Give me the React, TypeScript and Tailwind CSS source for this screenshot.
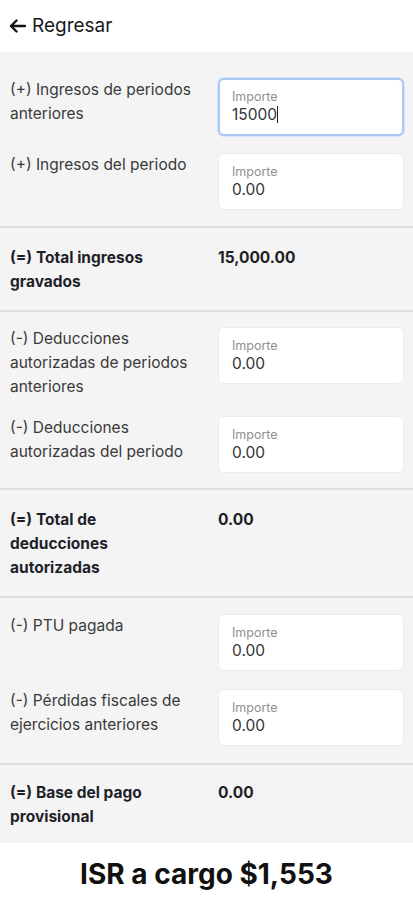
import { useState } from "react"

type InputRowProps = {
    label: string,
    value: string,
    focused?: boolean,
}

const InputRow = ({ label, value, focused = false }: InputRowProps) => {
    return (
        <div className="flex items-start">
            <span className="flex-1 pr-[20px] text-[15.5px] leading-[24px] text-[#3a3a3a]">{label}</span>
            <div
                className={
                    focused
                        ? "w-[186px] h-[58px] rounded-[6px] bg-white border-2 border-[#a9c9f3] px-[12px] pt-[9px] shadow-[0_0_0_1px_#d6e5fa]"
                        : "w-[186px] h-[57px] rounded-[6px] bg-white border border-[#ececec] px-[13px] pt-[10px]"
                }
            >
                <div className="text-[12.5px] leading-[16px] text-[#8f8f8f]">Importe</div>
                <div className="text-[15.5px] leading-[20px] text-[#333]">
                    {value}
                    {focused && <span className="inline-block w-[1px] h-[17px] bg-[#222] align-[-3px]" />}
                </div>
            </div>
        </div>
    )
}

type TotalRowProps = {
    label: string,
    value: string,
    className?: string,
}

const TotalRow = ({ label, value, className = "pt-[18px] pb-[16px]" }: TotalRowProps) => (
    <div className={"flex items-start border-t-2 border-[#dddddd] pl-[10px] pr-[9px] " + className}>
        <span className="flex-1 pr-[22px] text-[15.5px] leading-[24px] font-bold text-[#1f1f2a]">{label}</span>
        <span className="w-[186px] text-[15.5px] leading-[24px] font-bold text-[#1f1f1f]">{value}</span>
    </div>
)

const App = () => {
    const [ingresos] = useState("15000")
    return (
        <div className="w-[413px] min-h-[900px] bg-white font-['Inter','Noto_Sans',sans-serif] flex flex-col">
            <div className="h-[52px] flex items-center pl-[9px] gap-[6px] text-[19px] text-[#1a1a1a]">
                <svg width="17" height="14" viewBox="0 0 17 14" fill="none" stroke="#111" strokeWidth="2.4" strokeLinecap="round" strokeLinejoin="round">
                    <path d="M16 7H2M7.5 1.5L2 7l5.5 5.5" />
                </svg>
                <span>Regresar</span>
            </div>
            <div className="bg-[#f4f4f4]">
                <div className="flex flex-col gap-[17px] pl-[10px] pr-[9px] pt-[26px] pb-[16px]">
                    <InputRow label="(+) Ingresos de periodos anteriores" value={ingresos} focused />
                    <InputRow label="(+) Ingresos del periodo" value="0.00" />
                </div>
                <TotalRow label="(=) Total ingresos gravados" value="15,000.00" />
                <div className="flex flex-col gap-[17px] border-t-2 border-[#dddddd] pl-[10px] pr-[9px] pt-[15px] pb-[15px]">
                    <InputRow label="(-) Deducciones autorizadas de periodos anteriores" value="0.00" />
                    <InputRow label="(-) Deducciones autorizadas del periodo" value="0.00" />
                </div>
                <TotalRow label="(=) Total de deducciones autorizadas" value="0.00" className="pt-[18px] pb-[16px]" />
                <div className="flex flex-col gap-[18px] border-t-2 border-[#dddddd] pl-[10px] pr-[9px] pt-[16px] pb-[17px]">
                    <InputRow label="(-) PTU pagada" value="0.00" />
                    <InputRow label="(-) Pérdidas fiscales de ejercicios anteriores" value="0.00" />
                </div>
                <TotalRow label="(=) Base del pago provisional" value="0.00" className="pt-[16px] pb-[14px]" />
            </div>
            <div className="flex justify-center pt-[10px] text-[28px] font-bold text-[#111]">
                ISR a cargo $1,553
            </div>
        </div>
    )
}

export default App
